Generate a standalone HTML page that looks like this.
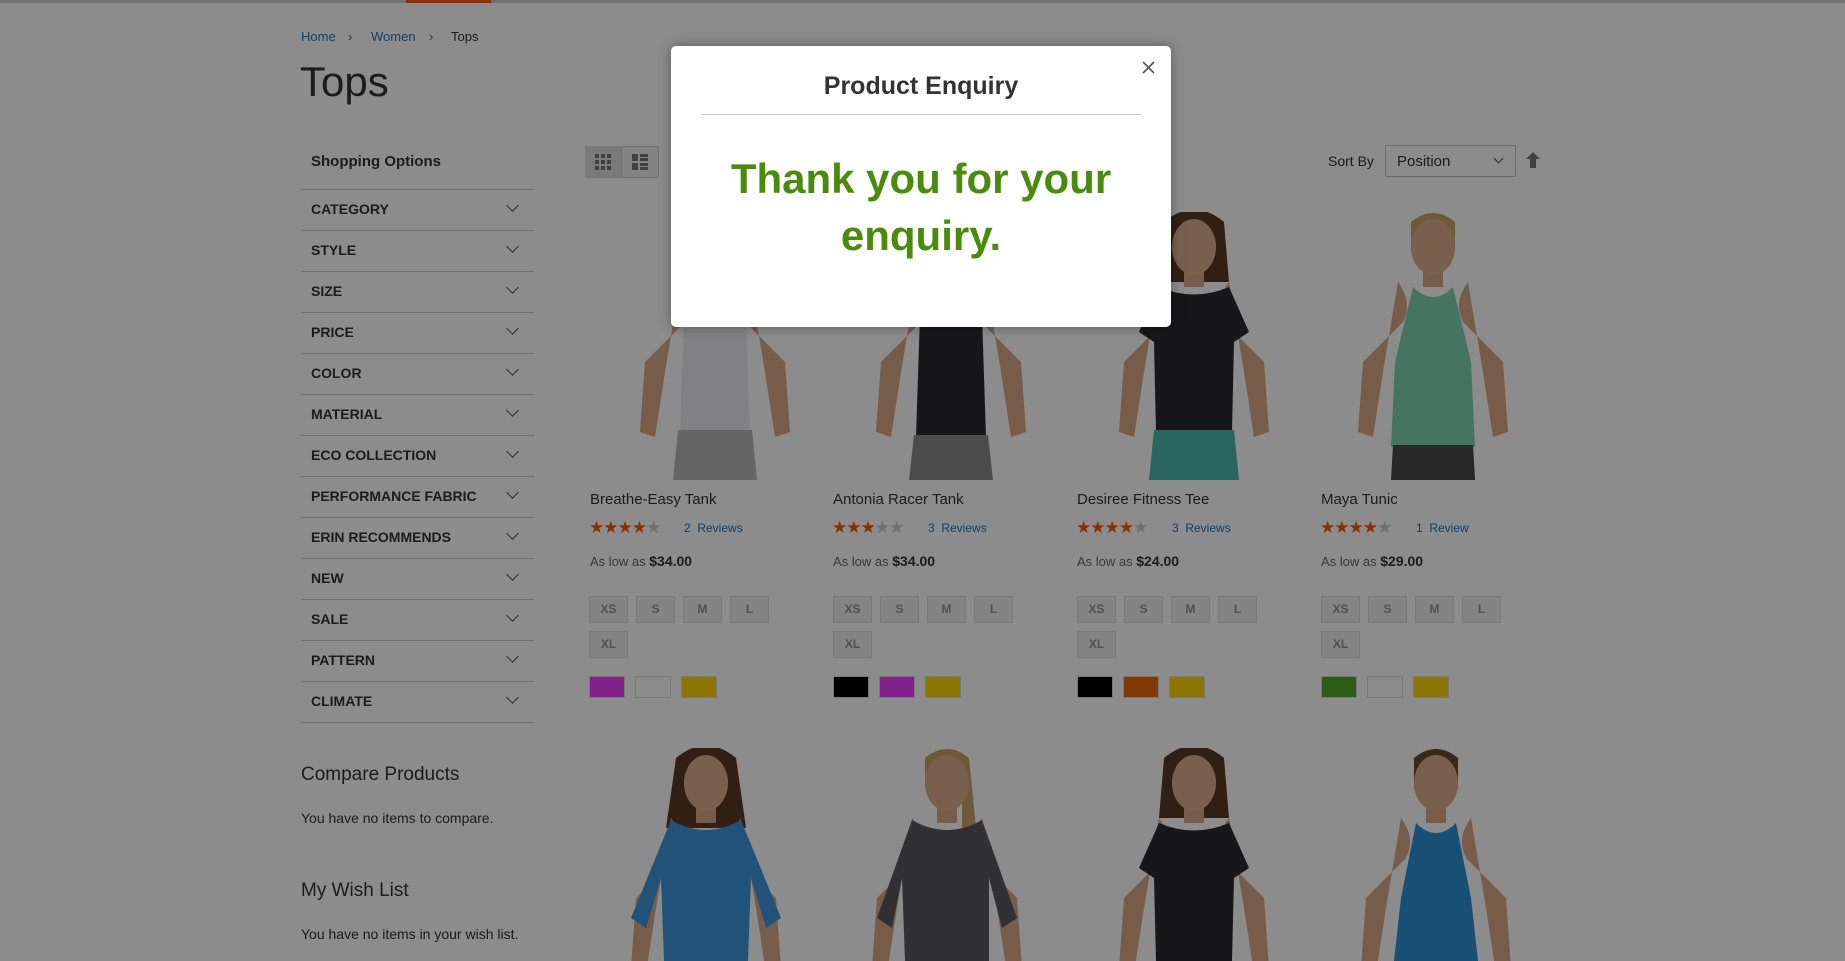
<!DOCTYPE html>
<html><head><meta charset="utf-8">
<style>
*{margin:0;padding:0;box-sizing:border-box}
body{width:1845px;height:961px;overflow:hidden;background:#fff;font-family:"Liberation Sans",sans-serif;color:#333;position:relative}
.a{position:absolute;white-space:nowrap}
.topbar{left:0;top:0;width:1845px;height:3px;background:#ccc}
.orange{left:406px;top:0;width:85px;height:3px;background:#ff5501}
.bc{top:29px;font-size:13px;color:#333}
.bc a{color:#1979c3;text-decoration:none}
.h1{left:300px;top:58px;font-size:42px;font-weight:300;color:#333}
.so{left:311px;top:153px;font-size:15px;font-weight:bold;color:#333}
.fl{left:301px;width:233px;border-top:1px solid #ccc}
.fi{left:311px;font-size:14px;font-weight:bold;color:#333}
.chev{position:absolute;left:508px;width:9px;height:9px;border-right:1.6px solid #555;border-bottom:1.6px solid #555;transform:rotate(45deg)}
.side2{font-size:19px;font-weight:300;color:#333}
.side3{font-size:14px;color:#333}
.pn{font-size:15px;color:#333}
.st{font-size:17px;letter-spacing:-1px;color:#ff5501}
.st i{font-style:normal;color:#ccc}
.rv{font-size:12px;color:#1979c3}
.pr{font-size:13px;color:#666}
.pr b{color:#333;font-size:14px}
.sz{width:39px;height:27px;border:1px solid #dadada;background:#f0f0f0;font-size:12px;font-weight:bold;color:#949494;text-align:center;line-height:25px}
.sw{width:36px;height:22px;border:1px solid #ddd}
.ov{left:0;top:0;width:1845px;height:961px;background:rgba(0,0,0,0.45)}
.modal{left:671px;top:46px;width:500px;height:281px;background:#fff;border-radius:5px;box-shadow:0 0 12px rgba(0,0,0,.35)}
</style></head><body>
<div class="a topbar"></div><div class="a orange"></div>
<div class="a bc" style="left:301px"><a>Home</a></div>
<div class="a bc" style="left:348px;color:#666">›</div>
<div class="a bc" style="left:371px"><a>Women</a></div>
<div class="a bc" style="left:429px;color:#666">›</div>
<div class="a bc" style="left:451px">Tops</div>
<div class="a h1">Tops</div>
<div class="a so">Shopping Options</div>

<div class="a fl" style="top:189px"></div>
<div class="a fi" style="top:201px">CATEGORY</div><div class="chev" style="top:201px"></div>
<div class="a fl" style="top:230px"></div>
<div class="a fi" style="top:242px">STYLE</div><div class="chev" style="top:242px"></div>
<div class="a fl" style="top:271px"></div>
<div class="a fi" style="top:283px">SIZE</div><div class="chev" style="top:283px"></div>
<div class="a fl" style="top:312px"></div>
<div class="a fi" style="top:324px">PRICE</div><div class="chev" style="top:324px"></div>
<div class="a fl" style="top:353px"></div>
<div class="a fi" style="top:365px">COLOR</div><div class="chev" style="top:365px"></div>
<div class="a fl" style="top:394px"></div>
<div class="a fi" style="top:406px">MATERIAL</div><div class="chev" style="top:406px"></div>
<div class="a fl" style="top:435px"></div>
<div class="a fi" style="top:447px">ECO COLLECTION</div><div class="chev" style="top:447px"></div>
<div class="a fl" style="top:476px"></div>
<div class="a fi" style="top:488px">PERFORMANCE FABRIC</div><div class="chev" style="top:488px"></div>
<div class="a fl" style="top:517px"></div>
<div class="a fi" style="top:529px">ERIN RECOMMENDS</div><div class="chev" style="top:529px"></div>
<div class="a fl" style="top:558px"></div>
<div class="a fi" style="top:570px">NEW</div><div class="chev" style="top:570px"></div>
<div class="a fl" style="top:599px"></div>
<div class="a fi" style="top:611px">SALE</div><div class="chev" style="top:611px"></div>
<div class="a fl" style="top:640px"></div>
<div class="a fi" style="top:652px">PATTERN</div><div class="chev" style="top:652px"></div>
<div class="a fl" style="top:681px"></div>
<div class="a fi" style="top:693px">CLIMATE</div><div class="chev" style="top:693px"></div>
<div class="a fl" style="top:722px"></div>

<div class="a side2" style="left:301px;top:764px">Compare Products</div>
<div class="a side3" style="left:301px;top:810px">You have no items to compare.</div>
<div class="a side2" style="left:301px;top:880px">My Wish List</div>
<div class="a side3" style="left:301px;top:926px">You have no items in your wish list.</div>

<div class="a" style="left:585px;top:146px;width:74px;height:32px;border:1px solid #ccc;border-radius:2px;background:#f0f0f0"></div>
<div class="a" style="left:585px;top:146px;width:37px;height:32px;background:#dedede;border-right:1px solid #ccc"></div>
<svg class="a" style="left:595px;top:154px" width="16" height="16"><g fill="#757575"><rect x="0" y="0" width="4" height="4"/><rect x="6" y="0" width="4" height="4"/><rect x="12" y="0" width="4" height="4"/><rect x="0" y="6" width="4" height="4"/><rect x="6" y="6" width="4" height="4"/><rect x="12" y="6" width="4" height="4"/><rect x="0" y="12" width="4" height="4"/><rect x="6" y="12" width="4" height="4"/><rect x="12" y="12" width="4" height="4"/></g></svg>
<svg class="a" style="left:632px;top:154px" width="16" height="16"><g fill="#757575"><rect x="0" y="0" width="6" height="7"/><rect x="8" y="0" width="8" height="3"/><rect x="8" y="4" width="8" height="3"/><rect x="0" y="9" width="6" height="7"/><rect x="8" y="9" width="8" height="3"/><rect x="8" y="13" width="8" height="3"/></g></svg>
<div class="a" style="left:1328px;top:153px;font-size:14px;color:#333">Sort By</div>
<div class="a" style="left:1385px;top:145px;width:131px;height:32px;border:1px solid #c2c2c2;border-radius:2px;background:#fff;font-size:15px;padding:7px 11px">Position</div>
<div class="chev" style="left:1495px;top:155px;width:7px;height:7px;border-width:1.4px"></div>
<svg class="a" style="left:1526px;top:152px" width="14" height="16"><path d="M7 0 L14 7 H10 V16 H4 V7 H0 Z" fill="#757575"/></svg>

<svg width="0" height="0" style="position:absolute"><defs>
<g id="body">
<path d="M95 70 Q110 90 100 110 L60 150 L55 220 L70 225 L80 160 Z" fill="#d9a888"/>
<path d="M165 70 Q150 90 160 110 L200 150 L205 220 L190 225 L180 160 Z" fill="#d9a888"/>
<rect x="120" y="50" width="20" height="25" fill="#d9a888"/>
<ellipse cx="130" cy="35" rx="22" ry="28" fill="#dcae8e"/>
</g></defs></svg>

<svg class="a" style="left:585px;top:212px" width="260" height="268"><path d="M108 10 Q130 -8 152 10 L152 50 L108 50Z" fill="#7a5a3a"/><use href="#body"/><path d="M100 72 Q130 90 160 72 L165 220 L95 220Z" fill="#ececee"/><path d="M93 218 L167 218 L172 268 L88 268Z" fill="#b8b8b8"/></svg>
<svg class="a" style="left:821px;top:212px" width="260" height="268"><use href="#body"/><path d="M100 72 Q130 90 160 72 L165 225 L95 225Z" fill="#2a2a2e"/><path d="M93 223 L167 223 L172 268 L88 268Z" fill="#8a8a8a"/></svg>
<svg class="a" style="left:1064px;top:212px" width="260" height="268"><path d="M100 10 Q130 -15 160 10 L165 70 L95 70Z" fill="#5a3a26"/><use href="#body"/><path d="M95 75 Q130 90 165 75 L185 120 L170 130 L168 220 L92 220 L90 130 L75 120Z" fill="#2a2a2e"/><path d="M90 218 L170 218 L175 268 L85 268Z" fill="#4fb8b0"/></svg>
<svg class="a" style="left:1303px;top:212px" width="260" height="268"><path d="M108 10 Q130 -8 152 10 L152 40 L108 40Z" fill="#c8a468"/><use href="#body"/><path d="M110 75 Q130 95 150 75 L168 150 L172 235 L88 235 L92 150Z" fill="#7fd3b2"/><path d="M90 233 L170 233 L172 268 L88 268Z" fill="#4a4a4a"/></svg>

<div class="a pn" style="left:590px;top:491px">Breathe-Easy Tank</div>
<div class="a st" style="left:589px;top:518px">★★★★<i>★</i></div><div class="a rv" style="left:684px;top:521px">2&nbsp; Reviews</div>
<div class="a pr" style="left:590px;top:553px">As low as <b>$34.00</b></div>
<div class="a pn" style="left:833px;top:491px">Antonia Racer Tank</div>
<div class="a st" style="left:832px;top:518px">★★★<i>★★</i></div><div class="a rv" style="left:928px;top:521px">3&nbsp; Reviews</div>
<div class="a pr" style="left:833px;top:553px">As low as <b>$34.00</b></div>
<div class="a pn" style="left:1077px;top:491px">Desiree Fitness Tee</div>
<div class="a st" style="left:1076px;top:518px">★★★★<i>★</i></div><div class="a rv" style="left:1172px;top:521px">3&nbsp; Reviews</div>
<div class="a pr" style="left:1077px;top:553px">As low as <b>$24.00</b></div>
<div class="a pn" style="left:1321px;top:491px">Maya Tunic</div>
<div class="a st" style="left:1320px;top:518px">★★★★<i>★</i></div><div class="a rv" style="left:1416px;top:521px">1&nbsp; Review</div>
<div class="a pr" style="left:1321px;top:553px">As low as <b>$29.00</b></div>

<div class="a sz" style="left:589px;top:596px">XS</div><div class="a sz" style="left:636px;top:596px">S</div><div class="a sz" style="left:683px;top:596px">M</div><div class="a sz" style="left:730px;top:596px">L</div><div class="a sz" style="left:589px;top:631px">XL</div>
<div class="a sz" style="left:833px;top:596px">XS</div><div class="a sz" style="left:880px;top:596px">S</div><div class="a sz" style="left:927px;top:596px">M</div><div class="a sz" style="left:974px;top:596px">L</div><div class="a sz" style="left:833px;top:631px">XL</div>
<div class="a sz" style="left:1077px;top:596px">XS</div><div class="a sz" style="left:1124px;top:596px">S</div><div class="a sz" style="left:1171px;top:596px">M</div><div class="a sz" style="left:1218px;top:596px">L</div><div class="a sz" style="left:1077px;top:631px">XL</div>
<div class="a sz" style="left:1321px;top:596px">XS</div><div class="a sz" style="left:1368px;top:596px">S</div><div class="a sz" style="left:1415px;top:596px">M</div><div class="a sz" style="left:1462px;top:596px">L</div><div class="a sz" style="left:1321px;top:631px">XL</div>

<div class="a sw" style="left:589px;top:676px;background:#ef3dff"></div><div class="a sw" style="left:635px;top:676px;background:#fff"></div><div class="a sw" style="left:681px;top:676px;background:#ffd500"></div>
<div class="a sw" style="left:833px;top:676px;background:#000"></div><div class="a sw" style="left:879px;top:676px;background:#ef3dff"></div><div class="a sw" style="left:925px;top:676px;background:#ffd500"></div>
<div class="a sw" style="left:1077px;top:676px;background:#000"></div><div class="a sw" style="left:1123px;top:676px;background:#eb6703"></div><div class="a sw" style="left:1169px;top:676px;background:#ffd500"></div>
<div class="a sw" style="left:1321px;top:676px;background:#53a828"></div><div class="a sw" style="left:1367px;top:676px;background:#fff"></div><div class="a sw" style="left:1413px;top:676px;background:#ffd500"></div>

<svg class="a" style="left:576px;top:748px" width="260" height="213"><path d="M100 10 Q130 -15 160 10 L170 80 L90 80Z" fill="#5a3a26"/><use href="#body"/><path d="M95 72 Q130 92 165 72 L205 170 L190 180 L175 130 L172 213 L88 213 L85 130 L70 180 L55 170Z" fill="#3d95dc"/></svg>
<svg class="a" style="left:817px;top:748px" width="260" height="213"><path d="M108 10 Q130 -8 152 10 L160 90 L145 90 L145 40 L108 40Z" fill="#c8a468"/><use href="#body"/><path d="M95 72 Q130 92 165 72 L200 170 L185 180 L172 130 L172 213 L88 213 L85 130 L75 180 L60 170Z" fill="#5a5a5e"/></svg>
<svg class="a" style="left:1064px;top:748px" width="260" height="213"><path d="M100 10 Q130 -15 160 10 L165 70 L95 70Z" fill="#5a3a26"/><use href="#body"/><path d="M95 75 Q130 90 165 75 L185 120 L170 130 L168 213 L92 213 L90 130 L75 120Z" fill="#2a2a2e"/></svg>
<svg class="a" style="left:1306px;top:748px" width="260" height="213"><path d="M108 10 Q130 -8 152 10 L152 40 L108 40Z" fill="#6a4a2e"/><use href="#body"/><path d="M110 75 Q130 95 150 75 L165 150 L172 213 L88 213 L95 150Z" fill="#2f8fd6"/></svg>

<div class="a ov"></div>

<div class="a modal">
  <div class="a" style="left:0;width:500px;top:26px;text-align:center;font-size:25px;font-weight:600;color:#333">Product Enquiry</div>
  <div class="a" style="left:30px;top:68px;width:440px;border-top:1px solid #c8c8c8"></div>
  <svg class="a" style="left:471px;top:15px" width="13" height="13"><path d="M1 1 L12 12 M12 1 L1 12" stroke="#555" stroke-width="1.6"/></svg>
  <div class="a" style="left:0;width:500px;top:104px;text-align:center;font-size:42px;font-weight:bold;color:#4a8a0c;line-height:57px">Thank you for your<br>enquiry.</div>
</div>
</body></html>
